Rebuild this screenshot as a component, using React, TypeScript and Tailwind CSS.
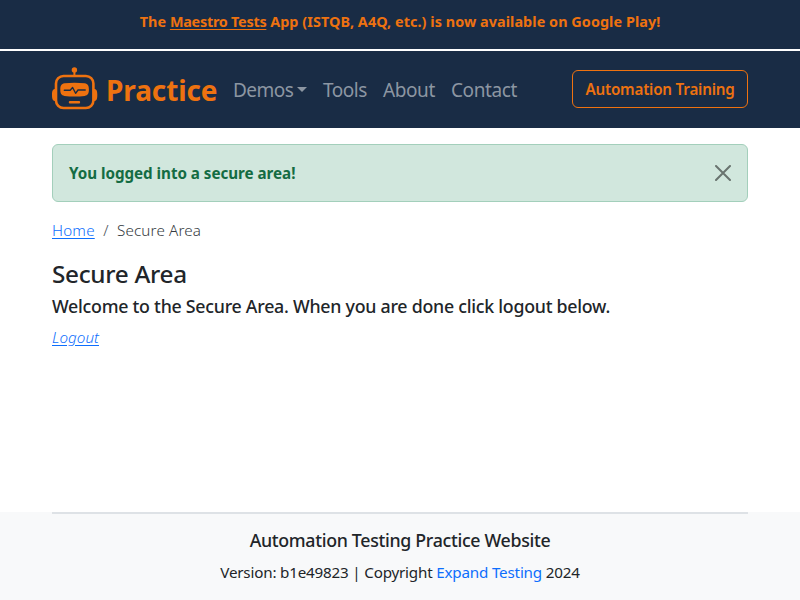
import React from "react";

function RobotLogo() {
  return (
    <svg width="46" height="44" viewBox="0 0 46 44" fill="none" className="block shrink-0">
      <circle cx="22.400" cy="2.900" r="2.700" fill="#ee7210" />
      <path d="M22.400 4V9" stroke="#ee7210" strokeWidth="2" />
      <rect x="4" y="9" width="37.400" height="32" rx="7.500" stroke="#ee7210" strokeWidth="2.600" />
      <path d="M4 22H2.600C.9 22.400 0 23.800 0 28s.9 5.600 2.600 6H4zM41.400 22h1.400c1.700.4 2.500 1.800 2.500 6s-.8 5.600-2.500 6h-1.400z" fill="#ee7210" />
      <path d="M12.500 16.300c6.500-.9 13.700-.9 20.200 0 3.200.5 4.200 2.600 4.200 6.300s-.9 5.900-4.200 6.300c-6.500.9-13.700.9-20.200 0-3.300-.4-4.200-2.600-4.200-6.300s1-5.800 4.200-6.300z" fill="#ee7210" />
      <path d="M12.300 23.200h5.900l2.400-2.700 3 5.800 2.400-3.300h7.200" stroke="#192c45" strokeWidth="1.400" strokeLinecap="round" strokeLinejoin="round" />
      <rect x="16.800" y="34" width="11.300" height="2.500" rx="1" fill="#ee7210" />
    </svg>
  );
}

export default function App() {
  return (
    <div className="flex h-[600px] w-[800px] flex-col overflow-hidden bg-white font-['Noto_Sans','Open_Sans',sans-serif] text-[15.2px] leading-6 text-[#212529]">
      <div className="flex h-[51px] shrink-0 justify-center border-b-2 border-white bg-[#192c45] pt-[10px]">
        <p className="text-[14.4px] font-bold whitespace-nowrap text-[#ee7210] tracking-[0.06px]">
          The <a className="tracking-[-0.25px] underline underline-offset-2">Maestro Tests</a> App (ISTQB, A4Q, etc.) is now available on Google Play!
        </p>
      </div>

      <nav className="flex h-[77px] shrink-0 items-center bg-[#192c45] px-[52px] pb-px whitespace-nowrap">
        <a className="flex items-center">
          <RobotLogo />
          <span className="ml-2 w-[127px] pt-px text-[28px] leading-10 font-bold tracking-[-0.1px] text-[#ee7210]">Practice</span>
        </a>
        <div className="flex pt-px text-[19px] leading-7 text-[#8c96a2]">
          <a className="flex w-[90px] items-center tracking-[-0.5px]">
            Demos
            <span className="ml-1 border-x-[5px] border-t-[5px] border-x-transparent border-t-[#8c96a2]" />
          </a>
          <a className="w-[60px] tracking-[-0.5px]">Tools</a>
          <a className="w-[68px] tracking-[-0.4px]">About</a>
          <a className="tracking-[-0.4px]">Contact</a>
        </div>
        <button className="ml-auto flex h-[38px] w-[176px] items-center justify-center rounded-md border border-[#ee7210] text-[15.2px] font-semibold tracking-[-0.2px] text-[#ee7210]">
          Automation Training
        </button>
      </nav>

      <main className="flex grow flex-col px-[52px] pt-4">
        <div className="flex h-[58px] items-center justify-between rounded-md border border-[#a3cfbb] bg-[#d1e7dd] pr-4 pl-4 text-[#146c43]">
          <b className="font-bold tracking-[-0.03px]">You logged into a secure area!</b>
          <svg width="16" height="16" viewBox="0 0 16 16" className="block" stroke="#69746f" strokeWidth="2" strokeLinecap="round">
            <path d="M1 1l14 14M15 1L1 15" />
          </svg>
        </div>

        <div className="mt-4 flex font-light">
          <a className="w-[43px] tracking-[0.2px] text-[#0d6efd] underline underline-offset-2">Home</a>
          <span className="w-[22px] text-center text-[#495057]">/</span>
          <span className="tracking-[0.15px] text-[#343a40]">Secure Area</span>
        </div>

        <h3 className="mt-[17px] text-[24.3px] leading-[30px] font-medium tracking-[-0.3px]">Secure Area</h3>
        <h4 className="mt-[6px] text-[17.8px] leading-[22px] font-medium tracking-[-0.26px]">
          Welcome to the Secure Area. When you are done click logout below.
        </h4>
        <a className="mt-2 self-start tracking-[0.05px] text-[#0d6efd] italic font-light underline underline-offset-2">Logout</a>
      </main>

      <footer className="h-[88px] shrink-0 bg-[#f8f9fa] px-[52px] text-center">
        <div className="h-[2px] bg-[#dee2e6]" />
        <h5 className="mt-[15px] text-[17.8px] leading-[22px] font-medium tracking-[-0.32px]">Automation Testing Practice Website</h5>
        <p className="mt-[9px] tracking-[-0.19px]">
          Version: b1e49823 | Copyright <a className="text-[#0d6efd]">Expand Testing</a> 2024
        </p>
      </footer>
    </div>
  );
}
